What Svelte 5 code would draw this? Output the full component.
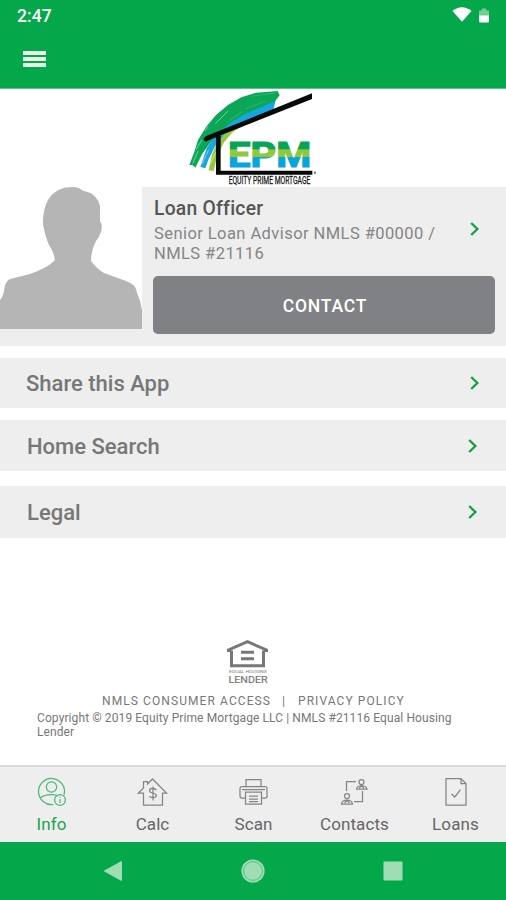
<script>
  const rows = [
    { label: 'Share this App', cls: 'share' },
    { label: 'Home Search', cls: 'home' },
    { label: 'Legal', cls: 'legal' }
  ];
  const tabs = ['Info', 'Calc', 'Scan', 'Contacts', 'Loans'];
</script>

{#snippet chevron()}
  <svg class="chevron" width="12" height="16" viewBox="0 0 12 16"><path d="M2.2 2 L8.4 8 L2.2 14" /></svg>
{/snippet}

<div class="screen">
  <header>
    <div class="status">
      <span class="time">2:47</span>
      <svg width="40" height="18" viewBox="0 0 40 18">
        <path d="M0.5 4 Q10 -3.5 19.5 4 L10 14.7 Z" fill="#fff" />
        <path d="M27 3.5 h2.7 v-2 h4.5 v2 H37 V9 H27Z" fill="#73ce96" />
        <path d="M27 8.5 H37 V14.5 Q37 15.5 36 15.5 H28 Q27 15.5 27 14.5Z" fill="#fff" />
      </svg>
    </div>
    <button class="menu" aria-label="Menu"><i></i><i></i><i></i></button>
  </header>

  <div class="logo">
    <svg width="150" height="98" viewBox="0 12 450 294">
      <defs>
        <linearGradient id="epm" gradientUnits="userSpaceOnUse" x1="0" y1="172" x2="0" y2="248">
          <stop offset="0" stop-color="#08a455" />
          <stop offset=".27" stop-color="#08a455" />
          <stop offset=".29" stop-color="#8fc73e" />
          <stop offset=".57" stop-color="#8fc73e" />
          <stop offset=".6" stop-color="#08a4dc" />
          <stop offset="1" stop-color="#08a4dc" />
        </linearGradient>
      </defs>
      <path d="M86 256 L96 208 L118 160 L152 118 L226 82 L248 88 L188 122 L156 143 L132 172 L112 210 L101 258Z" fill="#95c93d" />
      <path d="M61 246 L80 190 L112 140 L156 102 L214 68 L288 42 L280 76 L240 94 L178 118 L132 148 L104 186 L86 222 L76 250Z" fill="#17a5df" />
      <path d="M28 240 L42 203 L54 165 L78 126 L108 90 L144 60 L184 37 L228 23 L293 18 L299 31 L286 47 L240 68 L196 86 L154 112 L122 138 L94 168 L66 208 L46 248 L38 240Z" fill="#0ba757" />
      <path d="M84 124 L75 138 M48 194 L66 164 M38 236 L54 198 M66 238 L86 194 M106 116 L144 78 M91 238 L106 202" stroke="#fff" stroke-opacity=".55" stroke-width="2.5" fill="none" />
      <path d="M214 34 L286 24 M196 72 L256 48 M148 106 L186 80" stroke="#54c48d" stroke-opacity=".5" stroke-width="3" fill="none" />
      <path d="M70 162 L77 154 L396 25 L396 42 L122 151 V257 H397 V269 H108 V157 L76 170Z" fill="#080909" />
      <g fill="url(#epm)" stroke="url(#epm)">
        <text x="144" y="247" font-size="103" font-weight="700" stroke-width="3.5" textLength="250" lengthAdjust="spacingAndGlyphs">EPM</text>
      </g>
      <text x="146" y="298" font-size="30" fill="#17181a" stroke="#17181a" stroke-width=".8" textLength="245" lengthAdjust="spacingAndGlyphs">EQUITY PRIME MORTGAGE</text>
      <circle cx="405" cy="263" r="3.5" fill="#777" />
    </svg>
  </div>

  <section class="officer">
    <div class="photo">
      <svg width="142" height="142" viewBox="0 0 142 142">
        <path d="M0 142 V113 Q3 110 4 104 Q5 94 10 92 L30 87 Q49 80 55 73 Q54 65 49 58 Q45 49 43 37 C43 13 53 0 73 0 C80 0 81 4 86 4.5 Q97 7 100 19 V34 Q103 38 101 45 Q99 51 96 54 Q91 63 91 74 Q97 82 104 86 L126 94 Q136 97 137 106 Q141 114 142 123 V142Z" fill="#b5b5b5" />
      </svg>
    </div>
    <div class="details">
      <div class="person">
        <div>
          <h2>Loan Officer</h2>
          <p>Senior Loan Advisor NMLS #00000 /<br />NMLS #21116</p>
        </div>
        {@render chevron()}
      </div>
      <button class="contact">CONTACT</button>
    </div>
  </section>

  {#each rows as row}
    <div class="row {row.cls}"><span>{row.label}</span>{@render chevron()}</div>
  {/each}

  <footer>
    <svg width="44" height="46" viewBox="0 0 44 46">
      <path class="house" d="M2.5 12 V10 L21.5 1.7 L40.5 10 V12 M5.5 10.5 V25.8 H37.5 V10.5" />
      <path class="equals" d="M15 12.2 H28 M15 18.8 H28" />
      <text x="3" y="33" font-size="4.4" textLength="38" lengthAdjust="spacingAndGlyphs">EQUAL HOUSING</text>
      <text x="2.5" y="43" font-size="9.5" stroke="#777" stroke-width=".2" textLength="39" lengthAdjust="spacingAndGlyphs">LENDER</text>
    </svg>
    <div class="links"><span>NMLS CONSUMER ACCESS</span><b>|</b><span class="policy">PRIVACY POLICY</span></div>
    <p>Copyright © 2019 Equity Prime Mortgage LLC | NMLS #21116 Equal Housing<br />Lender</p>
  </footer>

  <nav class="tabs">
    {#each tabs as tab, i}
      <div class="tab" class:active={i === 0}>
        <svg width="32" height="30" viewBox="0 0 32 30">
          {#if tab === 'Info'}
            <path d="M17.5 27.5 C10 29 2.5 22.5 2.5 14.5 A13 13 0 1 1 28 18" />
            <circle cx="15.5" cy="10" r="5.2" />
            <path d="M4 21 Q8 17.5 15.5 17.5 Q20 17.5 22 19" />
            <circle cx="24" cy="23" r="5.4" />
            <path d="M24 22 V26 M24 19.5 V20.5" />
          {:else if tab === 'Calc'}
            <path d="M6.5 16 H1.5 L6.5 11 V4.5 H10.5 V7 L15.5 2 L29.5 16 H25.5 V28 H6.5Z" />
            <path d="M19.5 13 Q15.5 9.8 12.7 12.5 C11 17 19.7 15 19.5 19 Q17.5 22 12 19.5 M16 9.5 V23.5" />
          {:else if tab === 'Scan'}
            <path d="M8 9.5 V2.5 H23 V9.5 M7.5 21 H4 Q2 21 2 19 V11.5 Q2 9.5 4 9.5 H27 Q29 9.5 29 11.5 V19 Q29 21 27 21 H23.5 M7.5 15 H23.5 V27 H7.5Z M4 12.5 H27 M11 19 H20 M11 22 H20 M11 24.5 H20" />
          {:else if tab === 'Contacts'}
            <path d="M7.5 14 V4.5 H17 M23.5 14 V24.5 H15" />
            <circle cx="22.5" cy="5" r="2.5" />
            <circle cx="8" cy="19" r="2.5" />
            <path d="M17.5 12 Q18 9 22.5 8.5 Q27.5 9 28 12Z M2.5 27 Q3 23 8 23 Q13 23 13.5 27Z M20 11 L22.5 9 L25 11 M5.5 26 L8 23.5 L10.5 26" />
          {:else}
            <path d="M6 1.5 H21 L26 6.5 V28 H6Z M21 2 V6.5 H26 M11.5 17 L14.8 20 L20.5 12.7" />
          {/if}
        </svg>
        <span>{tab}</span>
      </div>
    {/each}
  </nav>

  <div class="system">
    <svg width="22" height="24" viewBox="0 0 22 24"><path d="M1.5 12 L19 2.2 Q20 2 20 3 V21 Q20 22 19 21.7Z" /></svg>
    <svg width="26" height="26" viewBox="0 0 26 26"><circle cx="13" cy="13" r="11.6" /><circle class="ring" cx="13" cy="13" r="9.4" /></svg>
    <svg width="22" height="24" viewBox="0 0 22 24"><rect x="1.5" y="2.5" width="19" height="19" rx="1" /></svg>
  </div>
</div>

<style>
  .screen { width: 506px; height: 900px; display: flex; flex-direction: column; background: #fff; font-family: Roboto, "Liberation Sans", sans-serif; overflow: hidden; color: #777; }
  .screen * { box-sizing: border-box; }
  header { flex: none; height: 89px; background: #04a84b; border-bottom: 1px solid #5bc389; }
  .status { height: 33px; display: flex; justify-content: space-between; align-items: flex-start; padding: 7px 14px 0 17px; }
  .time { color: #fff; font-size: 17.5px; line-height: 19px; font-weight: 500; letter-spacing: .1px; }
  .menu { border: 0; background: none; padding: 0; margin: 18px 0 0 23px; width: 23px; display: flex; flex-direction: column; gap: 2.5px; }
  .menu i { height: 3.7px; background: #e6f9e8; }
  .logo { flex: none; height: 98px; padding-left: 180px; }
  .logo svg { display: block; overflow: visible; }
  .officer { flex: none; height: 159px; background: #eee; display: flex; align-items: flex-start; }
  .photo { width: 142px; height: 142px; background: #fff; }
  .photo svg { display: block; }
  .details { flex: 1; padding: 10px 11px 0 11px; }
  .person { height: 79px; display: flex; justify-content: space-between; align-items: flex-start; }
  .person .chevron { margin: 24px 14px 0 0; }
  h2 { margin: 1px 0 4px 1px; font-size: 19.3px; line-height: 22px; font-weight: 500; color: #555; letter-spacing: .25px; }
  .person p { margin: 0 0 0 1px; font-size: 16.5px; line-height: 20px; color: #858585; letter-spacing: .43px; white-space: nowrap; }
  .contact { display: block; width: 342px; height: 58px; border: 0; border-radius: 5px; background: #808184; color: #fff; font: 500 17.5px Roboto, sans-serif; letter-spacing: .8px; padding: 1px 0 0 2px; }
  .chevron { flex: none; display: block; }
  .chevron path { fill: none; stroke: #159f43; stroke-width: 2.3; }
  .row { flex: none; background: #eee; display: flex; align-items: center; justify-content: space-between; padding: 1px 27px 0 27px; font-size: 22px; font-weight: 500; color: #777; }
  .row .chevron { margin-top: -1px; }
  .share { height: 50px; margin-top: 12px; padding: 0 25px 0 26px; }
  .home { height: 51px; margin-top: 12px; }
  .legal { height: 52px; margin-top: 15px; }
  .legal span { margin-top: -1px; }
  footer { flex: 1; display: flex; flex-direction: column; align-items: center; padding-top: 102px; }
  footer svg { display: block; margin-right: 10px; }
  .house { fill: none; stroke: #777; stroke-width: 3; }
  .equals { fill: none; stroke: #777; stroke-width: 3; }
  footer text { fill: #777; }
  .links { display: flex; margin-top: 8px; font-size: 12px; line-height: 15px; letter-spacing: 1.08px; white-space: nowrap; padding-left: 1px; }
  .links b { font-weight: 400; margin: 0 12px 0 11px; }
  footer p { align-self: stretch; margin: 2px 0 0 37px; font-size: 12px; line-height: 14px; letter-spacing: .1px; white-space: nowrap; }
  .tabs { flex: none; height: 77px; background: #eee; border-top: 2px solid #dadada; display: flex; padding-left: 1px; }
  .tab { flex: 1; display: flex; flex-direction: column; align-items: center; padding-top: 10px; color: #666; }
  .tab svg { display: block; fill: none; stroke: #858585; stroke-width: 1.25; }
  .tab span { font-size: 17px; line-height: 20px; margin-top: 7px; letter-spacing: .1px; }
  .tab.active { color: #18a550; }
  .tab.active svg { stroke: #4fb779; }
  .system { flex: none; height: 58px; background: #04a84b; display: flex; align-items: center; justify-content: space-between; padding: 0 102px; }
  .system svg { fill: #9fddb5; display: block; }
  .system .ring { fill: none; stroke: #51ba79; stroke-width: .9; }
</style>
